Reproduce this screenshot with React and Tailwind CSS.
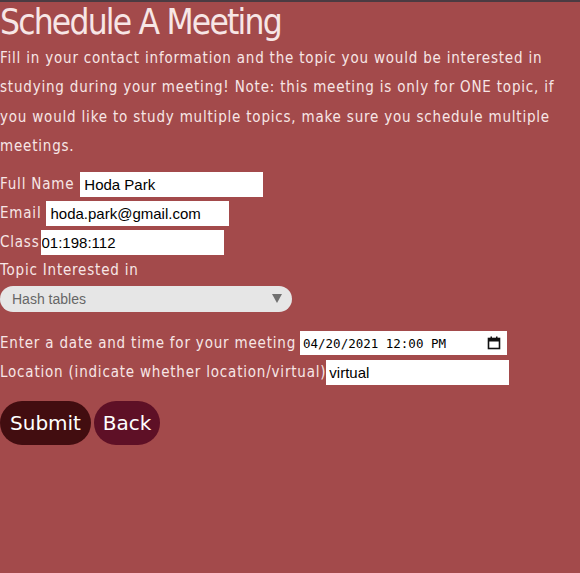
import React from 'react';

const font = { fontFamily: '"DejaVu Sans Condensed", "DejaVu Sans", Verdana, sans-serif' };

export default function App() {
    return (
        <div className="min-h-[573px] bg-[#a34a4b] border-t-2 border-[#4b3b42] text-[#f7e6e6]" style={font}>
            <h1 className="text-[35px] leading-[44px] tracking-[-1.8px] -mt-[2px]">Schedule A Meeting</h1>
            <p className="text-[15px] leading-[29.3px] tracking-[0.8px] pr-4">
                Fill in your contact information and the topic you would be interested in studying during your meeting! Note: this meeting is only for ONE topic, if you would like to study multiple topics, make sure you schedule multiple meetings.
            </p>
            <form className="text-[15px] tracking-[0.8px] mt-[11px]">
                <div className="flex items-center h-[25px] mb-[4px]">
                    <label className="mr-[6px]">Full Name</label>
                    <input className="bg-white text-black w-[183px] h-[25px] px-[4px] text-[15px] tracking-normal font-['Liberation_Sans'] outline-none" defaultValue="Hoda Park" />
                </div>
                <div className="flex items-center h-[25px] mb-[4px]">
                    <label className="mr-[5px]">Email</label>
                    <input className="bg-white text-black w-[183px] h-[25px] px-[4px] text-[15px] tracking-normal font-['Liberation_Sans'] outline-none" defaultValue="hoda.park@gmail.com" />
                </div>
                <div className="flex items-center h-[25px]">
                    <label className="mr-[1px]">Class</label>
                    <input className="bg-white text-black w-[183px] h-[25px] px-[1px] text-[15px] tracking-normal font-['Liberation_Sans'] outline-none" defaultValue="01:198:112" />
                </div>
                <div className="h-[30px] flex items-center">Topic Interested in</div>
                <div className="relative w-[292px] h-[26px] mt-[1px]">
                    <select className="appearance-none w-full h-full rounded-full bg-[#e6e6e6] text-[#666] px-[12px] text-[14px] tracking-normal font-['Liberation_Sans'] outline-none" defaultValue="Hash tables">
                        <option>Hash tables</option>
                        <option>Linked lists</option>
                        <option>Recursion</option>
                    </select>
                    <span className="pointer-events-none absolute right-[10px] top-[8px] w-0 h-0 border-l-[5px] border-r-[5px] border-t-[9px] border-l-transparent border-r-transparent border-t-[#707070]"></span>
                </div>
                <div className="flex items-center h-[24px] mt-[19px] mb-[5px]">
                    <label className="mr-[4px]">Enter a date and time for your meeting</label>
                    <div className="relative">
                        <input className="bg-white text-black w-[207px] h-[24px] pl-[3px] text-[12.5px] tracking-normal font-['DejaVu_Sans_Mono'] outline-none" defaultValue="04/20/2021 12:00 PM" />
                        <svg className="pointer-events-none absolute right-[6px] top-[5px]" width="14" height="14" viewBox="0 0 14 14">
                            <rect x="1.5" y="2.5" width="11" height="10" fill="none" stroke="#111" strokeWidth="1.6" />
                            <rect x="1.5" y="2.5" width="11" height="3" fill="#111" />
                            <rect x="3.5" y="0.5" width="1.5" height="2.5" fill="#111" />
                            <rect x="9" y="0.5" width="1.5" height="2.5" fill="#111" />
                        </svg>
                    </div>
                </div>
                <div className="flex items-center h-[25px]">
                    <label className="mr-0">Location (indicate whether location/virtual)</label>
                    <input className="bg-white text-black w-[183px] h-[25px] px-[3px] text-[15px] tracking-normal font-['Liberation_Sans'] outline-none" defaultValue="virtual" />
                </div>
                <div className="flex gap-[3px] mt-[16px]">
                    <button type="button" className="bg-[#420d10] text-white rounded-[22px] h-[44px] w-[91px] text-[20px] tracking-normal" style={{ fontFamily: '"DejaVu Sans", sans-serif' }}>Submit</button>
                    <button type="button" className="bg-[#5e1026] text-white rounded-[22px] h-[44px] w-[66px] text-[20px] tracking-normal" style={{ fontFamily: '"DejaVu Sans", sans-serif' }}>Back</button>
                </div>
            </form>
        </div>
    );
}
